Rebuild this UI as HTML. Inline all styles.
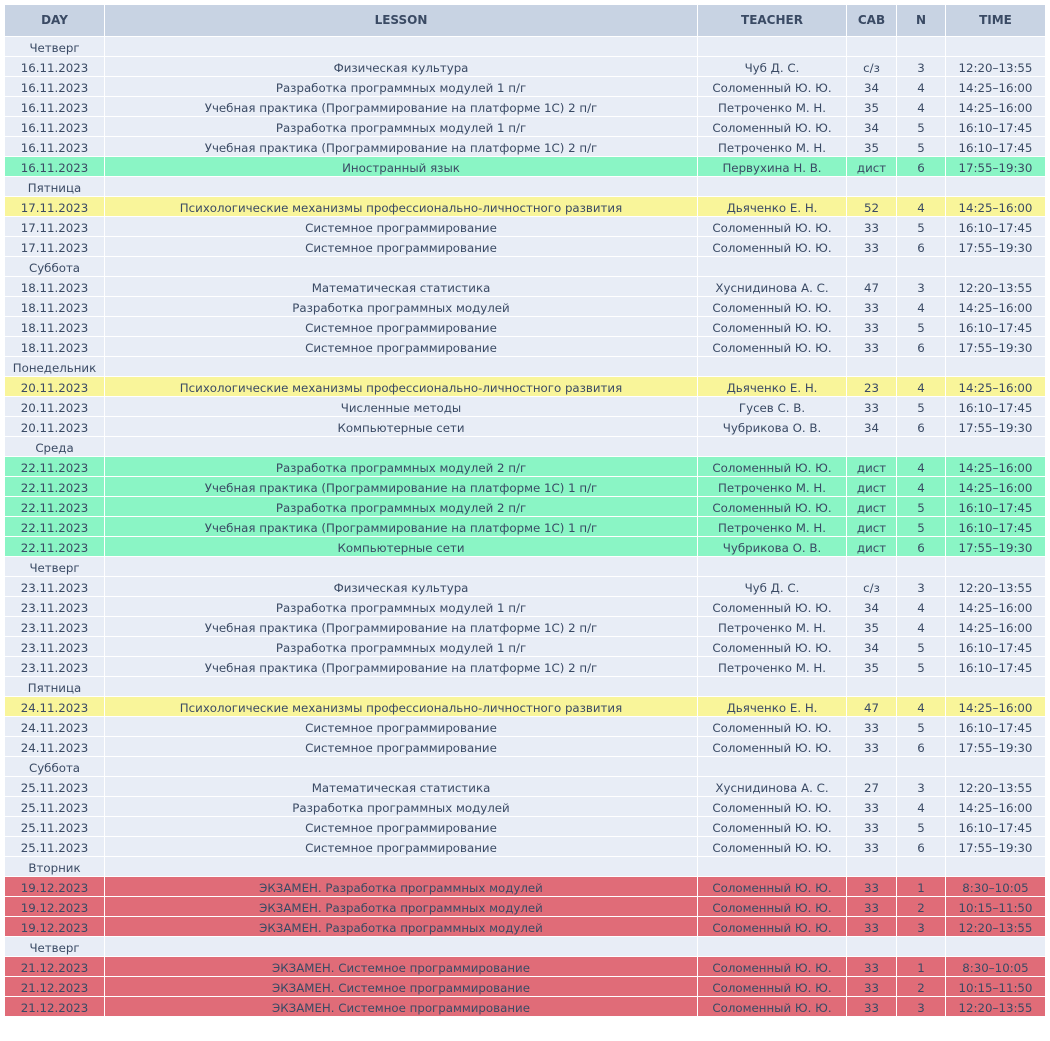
<!DOCTYPE html>
<html><head><meta charset="utf-8"><style>
body{margin:0;background:#fff;}
table{position:absolute;left:4px;top:4px;border-collapse:separate;border-spacing:1px;font-family:"DejaVu Sans","Liberation Sans",sans-serif;font-size:11.8px;color:#3a4a64;}
td,th{text-align:center;white-space:nowrap;overflow:hidden;background:#e8edf6;}
td{padding:3px 0 0 0;height:16px;line-height:16px;}
th{padding:0;height:31px;line-height:31px;background:#c8d3e3;font-weight:bold;font-size:12px;color:#3a4a64;}
.g td{background:#8af5c5}.y td{background:#f9f59a}.r td{background:#e06c78}
</style></head><body>
<table>
<colgroup><col style="width:99px"><col style="width:592px"><col style="width:148px"><col style="width:49px"><col style="width:48px"><col style="width:99px"></colgroup>
<tr><th>DAY</th><th>LESSON</th><th>TEACHER</th><th>CAB</th><th>N</th><th>TIME</th></tr>
<tr><td>Четверг</td><td></td><td></td><td></td><td></td><td></td></tr>
<tr><td>16.11.2023</td><td>Физическая культура</td><td>Чуб Д. С.</td><td>с/з</td><td>3</td><td>12:20–13:55</td></tr>
<tr><td>16.11.2023</td><td>Разработка программных модулей 1 п/г</td><td>Соломенный Ю. Ю.</td><td>34</td><td>4</td><td>14:25–16:00</td></tr>
<tr><td>16.11.2023</td><td>Учебная практика (Программирование на платформе 1С) 2 п/г</td><td>Петроченко М. Н.</td><td>35</td><td>4</td><td>14:25–16:00</td></tr>
<tr><td>16.11.2023</td><td>Разработка программных модулей 1 п/г</td><td>Соломенный Ю. Ю.</td><td>34</td><td>5</td><td>16:10–17:45</td></tr>
<tr><td>16.11.2023</td><td>Учебная практика (Программирование на платформе 1С) 2 п/г</td><td>Петроченко М. Н.</td><td>35</td><td>5</td><td>16:10–17:45</td></tr>
<tr class="g"><td>16.11.2023</td><td>Иностранный язык</td><td>Первухина Н. В.</td><td>дист</td><td>6</td><td>17:55–19:30</td></tr>
<tr><td>Пятница</td><td></td><td></td><td></td><td></td><td></td></tr>
<tr class="y"><td>17.11.2023</td><td>Психологические механизмы профессионально-личностного развития</td><td>Дьяченко Е. Н.</td><td>52</td><td>4</td><td>14:25–16:00</td></tr>
<tr><td>17.11.2023</td><td>Системное программирование</td><td>Соломенный Ю. Ю.</td><td>33</td><td>5</td><td>16:10–17:45</td></tr>
<tr><td>17.11.2023</td><td>Системное программирование</td><td>Соломенный Ю. Ю.</td><td>33</td><td>6</td><td>17:55–19:30</td></tr>
<tr><td>Суббота</td><td></td><td></td><td></td><td></td><td></td></tr>
<tr><td>18.11.2023</td><td>Математическая статистика</td><td>Хуснидинова А. С.</td><td>47</td><td>3</td><td>12:20–13:55</td></tr>
<tr><td>18.11.2023</td><td>Разработка программных модулей</td><td>Соломенный Ю. Ю.</td><td>33</td><td>4</td><td>14:25–16:00</td></tr>
<tr><td>18.11.2023</td><td>Системное программирование</td><td>Соломенный Ю. Ю.</td><td>33</td><td>5</td><td>16:10–17:45</td></tr>
<tr><td>18.11.2023</td><td>Системное программирование</td><td>Соломенный Ю. Ю.</td><td>33</td><td>6</td><td>17:55–19:30</td></tr>
<tr><td>Понедельник</td><td></td><td></td><td></td><td></td><td></td></tr>
<tr class="y"><td>20.11.2023</td><td>Психологические механизмы профессионально-личностного развития</td><td>Дьяченко Е. Н.</td><td>23</td><td>4</td><td>14:25–16:00</td></tr>
<tr><td>20.11.2023</td><td>Численные методы</td><td>Гусев С. В.</td><td>33</td><td>5</td><td>16:10–17:45</td></tr>
<tr><td>20.11.2023</td><td>Компьютерные сети</td><td>Чубрикова О. В.</td><td>34</td><td>6</td><td>17:55–19:30</td></tr>
<tr><td>Среда</td><td></td><td></td><td></td><td></td><td></td></tr>
<tr class="g"><td>22.11.2023</td><td>Разработка программных модулей 2 п/г</td><td>Соломенный Ю. Ю.</td><td>дист</td><td>4</td><td>14:25–16:00</td></tr>
<tr class="g"><td>22.11.2023</td><td>Учебная практика (Программирование на платформе 1С) 1 п/г</td><td>Петроченко М. Н.</td><td>дист</td><td>4</td><td>14:25–16:00</td></tr>
<tr class="g"><td>22.11.2023</td><td>Разработка программных модулей 2 п/г</td><td>Соломенный Ю. Ю.</td><td>дист</td><td>5</td><td>16:10–17:45</td></tr>
<tr class="g"><td>22.11.2023</td><td>Учебная практика (Программирование на платформе 1С) 1 п/г</td><td>Петроченко М. Н.</td><td>дист</td><td>5</td><td>16:10–17:45</td></tr>
<tr class="g"><td>22.11.2023</td><td>Компьютерные сети</td><td>Чубрикова О. В.</td><td>дист</td><td>6</td><td>17:55–19:30</td></tr>
<tr><td>Четверг</td><td></td><td></td><td></td><td></td><td></td></tr>
<tr><td>23.11.2023</td><td>Физическая культура</td><td>Чуб Д. С.</td><td>с/з</td><td>3</td><td>12:20–13:55</td></tr>
<tr><td>23.11.2023</td><td>Разработка программных модулей 1 п/г</td><td>Соломенный Ю. Ю.</td><td>34</td><td>4</td><td>14:25–16:00</td></tr>
<tr><td>23.11.2023</td><td>Учебная практика (Программирование на платформе 1С) 2 п/г</td><td>Петроченко М. Н.</td><td>35</td><td>4</td><td>14:25–16:00</td></tr>
<tr><td>23.11.2023</td><td>Разработка программных модулей 1 п/г</td><td>Соломенный Ю. Ю.</td><td>34</td><td>5</td><td>16:10–17:45</td></tr>
<tr><td>23.11.2023</td><td>Учебная практика (Программирование на платформе 1С) 2 п/г</td><td>Петроченко М. Н.</td><td>35</td><td>5</td><td>16:10–17:45</td></tr>
<tr><td>Пятница</td><td></td><td></td><td></td><td></td><td></td></tr>
<tr class="y"><td>24.11.2023</td><td>Психологические механизмы профессионально-личностного развития</td><td>Дьяченко Е. Н.</td><td>47</td><td>4</td><td>14:25–16:00</td></tr>
<tr><td>24.11.2023</td><td>Системное программирование</td><td>Соломенный Ю. Ю.</td><td>33</td><td>5</td><td>16:10–17:45</td></tr>
<tr><td>24.11.2023</td><td>Системное программирование</td><td>Соломенный Ю. Ю.</td><td>33</td><td>6</td><td>17:55–19:30</td></tr>
<tr><td>Суббота</td><td></td><td></td><td></td><td></td><td></td></tr>
<tr><td>25.11.2023</td><td>Математическая статистика</td><td>Хуснидинова А. С.</td><td>27</td><td>3</td><td>12:20–13:55</td></tr>
<tr><td>25.11.2023</td><td>Разработка программных модулей</td><td>Соломенный Ю. Ю.</td><td>33</td><td>4</td><td>14:25–16:00</td></tr>
<tr><td>25.11.2023</td><td>Системное программирование</td><td>Соломенный Ю. Ю.</td><td>33</td><td>5</td><td>16:10–17:45</td></tr>
<tr><td>25.11.2023</td><td>Системное программирование</td><td>Соломенный Ю. Ю.</td><td>33</td><td>6</td><td>17:55–19:30</td></tr>
<tr><td>Вторник</td><td></td><td></td><td></td><td></td><td></td></tr>
<tr class="r"><td>19.12.2023</td><td>ЭКЗАМЕН. Разработка программных модулей</td><td>Соломенный Ю. Ю.</td><td>33</td><td>1</td><td>8:30–10:05</td></tr>
<tr class="r"><td>19.12.2023</td><td>ЭКЗАМЕН. Разработка программных модулей</td><td>Соломенный Ю. Ю.</td><td>33</td><td>2</td><td>10:15–11:50</td></tr>
<tr class="r"><td>19.12.2023</td><td>ЭКЗАМЕН. Разработка программных модулей</td><td>Соломенный Ю. Ю.</td><td>33</td><td>3</td><td>12:20–13:55</td></tr>
<tr><td>Четверг</td><td></td><td></td><td></td><td></td><td></td></tr>
<tr class="r"><td>21.12.2023</td><td>ЭКЗАМЕН. Системное программирование</td><td>Соломенный Ю. Ю.</td><td>33</td><td>1</td><td>8:30–10:05</td></tr>
<tr class="r"><td>21.12.2023</td><td>ЭКЗАМЕН. Системное программирование</td><td>Соломенный Ю. Ю.</td><td>33</td><td>2</td><td>10:15–11:50</td></tr>
<tr class="r"><td>21.12.2023</td><td>ЭКЗАМЕН. Системное программирование</td><td>Соломенный Ю. Ю.</td><td>33</td><td>3</td><td>12:20–13:55</td></tr>
</table>
</body></html>
